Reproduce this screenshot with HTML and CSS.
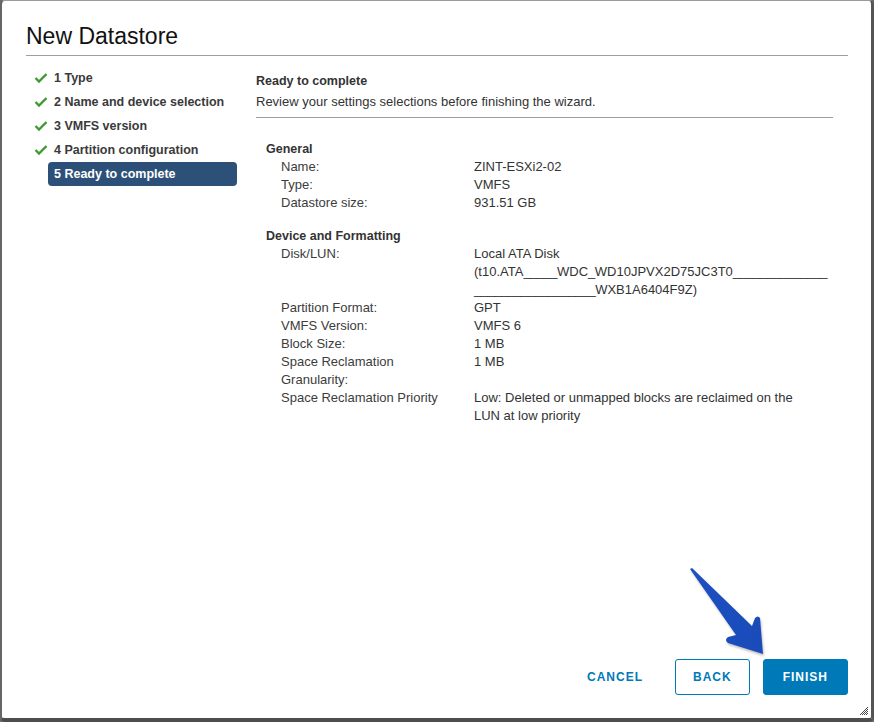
FILE: index.html
```html
<!DOCTYPE html>
<html lang="en">
<head>
  <meta charset="UTF-8">
  <title>New Datastore</title>
  <link rel="stylesheet" href="styles.css">
</head>
<body>

<div class="dialog">
  <div class="dialog-header">
    <h1>New Datastore</h1>
  </div>

  <div class="dialog-body">
    <ul class="steps">
      <li class="step done"><svg class="check" width="14" height="12" viewBox="0 0 14 12"><path d="M1.5 6 L5 9.5 L12.5 2" fill="none" stroke="#3d9a33" stroke-width="2.4" /></svg><span class="step-label">1 Type</span></li>
      <li class="step done"><svg class="check" width="14" height="12" viewBox="0 0 14 12"><path d="M1.5 6 L5 9.5 L12.5 2" fill="none" stroke="#3d9a33" stroke-width="2.4" /></svg><span class="step-label">2 Name and device selection</span></li>
      <li class="step done"><svg class="check" width="14" height="12" viewBox="0 0 14 12"><path d="M1.5 6 L5 9.5 L12.5 2" fill="none" stroke="#3d9a33" stroke-width="2.4" /></svg><span class="step-label">3 VMFS version</span></li>
      <li class="step done"><svg class="check" width="14" height="12" viewBox="0 0 14 12"><path d="M1.5 6 L5 9.5 L12.5 2" fill="none" stroke="#3d9a33" stroke-width="2.4" /></svg><span class="step-label">4 Partition configuration</span></li>
      <li class="step active"><span class="check"></span><span class="step-label">5 Ready to complete</span></li>
    </ul>

    <div class="page">
      <div class="page-title">Ready to complete</div>
      <div class="page-desc">Review your settings selections before finishing the wizard.</div>

      <div class="summary">
        <div class="group">
          <div class="group-title">General</div>
          <div class="row"><div class="key">Name:</div><div class="val">ZINT-ESXi2-02</div></div>
          <div class="row"><div class="key">Type:</div><div class="val">VMFS</div></div>
          <div class="row"><div class="key">Datastore size:</div><div class="val">931.51 GB</div></div>
        </div>

        <div class="group">
          <div class="group-title">Device and Formatting</div>
          <div class="row"><div class="key">Disk/LUN:</div><div class="val">Local ATA Disk<br>(t10.ATA<span class="fill">_____</span>WDC<span class="fill">_</span>WD10JPVX2D75JC3T0<span class="fill">______________</span><br><span class="fill">__________________</span>WXB1A6404F9Z)</div></div>
          <div class="row"><div class="key">Partition Format:</div><div class="val">GPT</div></div>
          <div class="row"><div class="key">VMFS Version:</div><div class="val">VMFS 6</div></div>
          <div class="row"><div class="key">Block Size:</div><div class="val">1 MB</div></div>
          <div class="row"><div class="key">Space Reclamation<br>Granularity:</div><div class="val">1 MB</div></div>
          <div class="row"><div class="key">Space Reclamation Priority</div><div class="val">Low: Deleted or unmapped blocks are reclaimed on the<br>LUN at low priority</div></div>
        </div>
      </div>
    </div>
  </div>

  <div class="dialog-footer">
    <button class="btn btn-link">CANCEL</button>
    <button class="btn btn-outline">BACK</button>
    <button class="btn btn-primary">FINISH</button>
  </div>

  <!-- callout arrow pointing at Finish -->
  <svg class="callout" width="90" height="100" viewBox="0 0 90 100">
    <defs>
      <linearGradient id="arrowFill" x1="0" y1="0" x2="1" y2="1">
        <stop offset="0" stop-color="#1d4fc4"/>
        <stop offset="1" stop-color="#1a4bb8"/>
      </linearGradient>
    </defs>
    <path d="M4 3 L6 2 L66 60 L69 52 Q72 49 74 52 L77 88 L42 77 Q38 74 42 71 L50 69 Z" fill="url(#arrowFill)" />
  </svg>

  <svg class="grip" width="10" height="10" viewBox="0 0 10 10">
    <path d="M9 1 L1 9 M9 3 L3 9 M9 5 L5 9 M9 7 L7 9" stroke="#444" stroke-width="1" />
  </svg>
</div>

</body>
</html>
```

FILE: styles.css
```css
html, body {
  margin: 0;
  padding: 0;
  background-color: #6b6b6b;
  font-family: "Liberation Sans", Arial, sans-serif;
  color: #333;
}

.dialog {
  position: relative;
  box-sizing: border-box;
  width: 874px;
  height: 722px;
  background-color: #fff;
  border-style: solid;
  border-color: #9a9a9a #555 #4d4d4d #666;
  border-width: 1px 3px 4px 2px;
  border-radius: 5px;
  display: flex;
  flex-direction: column;
}

.dialog-header {
  padding: 0 23px 0 24px;
}

.dialog-header h1 {
  margin: 0;
  padding: 21px 0 5px 0;
  font-size: 23px;
  font-weight: normal;
  color: #111;
  line-height: 28px;
  border-bottom: 1px solid #9e9e9e;
}

.dialog-body {
  flex: 1;
  display: flex;
  padding: 10px 38px 0 24px;
}

.steps {
  list-style: none;
  margin: 0;
  padding: 0 0 0 8px;
  width: 203px;
  margin-right: 19px;
}

.step {
  display: flex;
  align-items: center;
  height: 24px;
  font-size: 12.5px;
  font-weight: bold;
  color: #3a3a3a;
}

.check {
  width: 14px;
  flex: none;
}

.step-label {
  flex: 1;
  padding: 0 6px;
  line-height: 24px;
  border-radius: 4px;
}

.step.active .step-label {
  background-color: #2c5078;
  color: #fff;
}

.page {
  flex: 1;
  padding-top: 5px;
  font-size: 13px;
}

.page-title {
  font-size: 12.5px;
  font-weight: bold;
  line-height: 20px;
}

.page-desc {
  line-height: 22px;
  padding-bottom: 4px;
  border-bottom: 1px solid #9e9e9e;
}

.summary {
  padding: 22px 0 0 10px;
}

.group {
  margin-bottom: 15px;
}

.group-title {
  font-size: 12.5px;
  font-weight: bold;
  line-height: 18px;
}

.row {
  display: flex;
  line-height: 18px;
  padding-left: 15px;
}

.key {
  width: 193px;
  color: #3c3c3c;
}

.val {
  flex: 1;
}

.fill {
  letter-spacing: -0.5px;
}

.dialog-footer {
  display: flex;
  justify-content: flex-end;
  gap: 13px;
  padding: 0 23px 23px 0;
}

.btn {
  height: 36px;
  padding: 0 18px;
  font-family: "Liberation Sans", Arial, sans-serif;
  font-size: 12px;
  font-weight: bold;
  letter-spacing: 1px;
  border-radius: 3px;
  border: 1px solid transparent;
  background: none;
  color: #0079b8;
}

.btn-outline {
  border-color: #0079b8;
  background-color: #fff;
  padding: 0 17px;
}

.btn-primary {
  background-color: #0079b8;
  border-color: #0079b8;
  color: #fff;
  padding: 0 19px;
}

.callout {
  position: absolute;
  left: 684px;
  top: 565px;
  filter: drop-shadow(1px 2px 1px rgba(0,0,0,0.25));
}

.grip {
  position: absolute;
  right: 2px;
  bottom: 2px;
}
```
